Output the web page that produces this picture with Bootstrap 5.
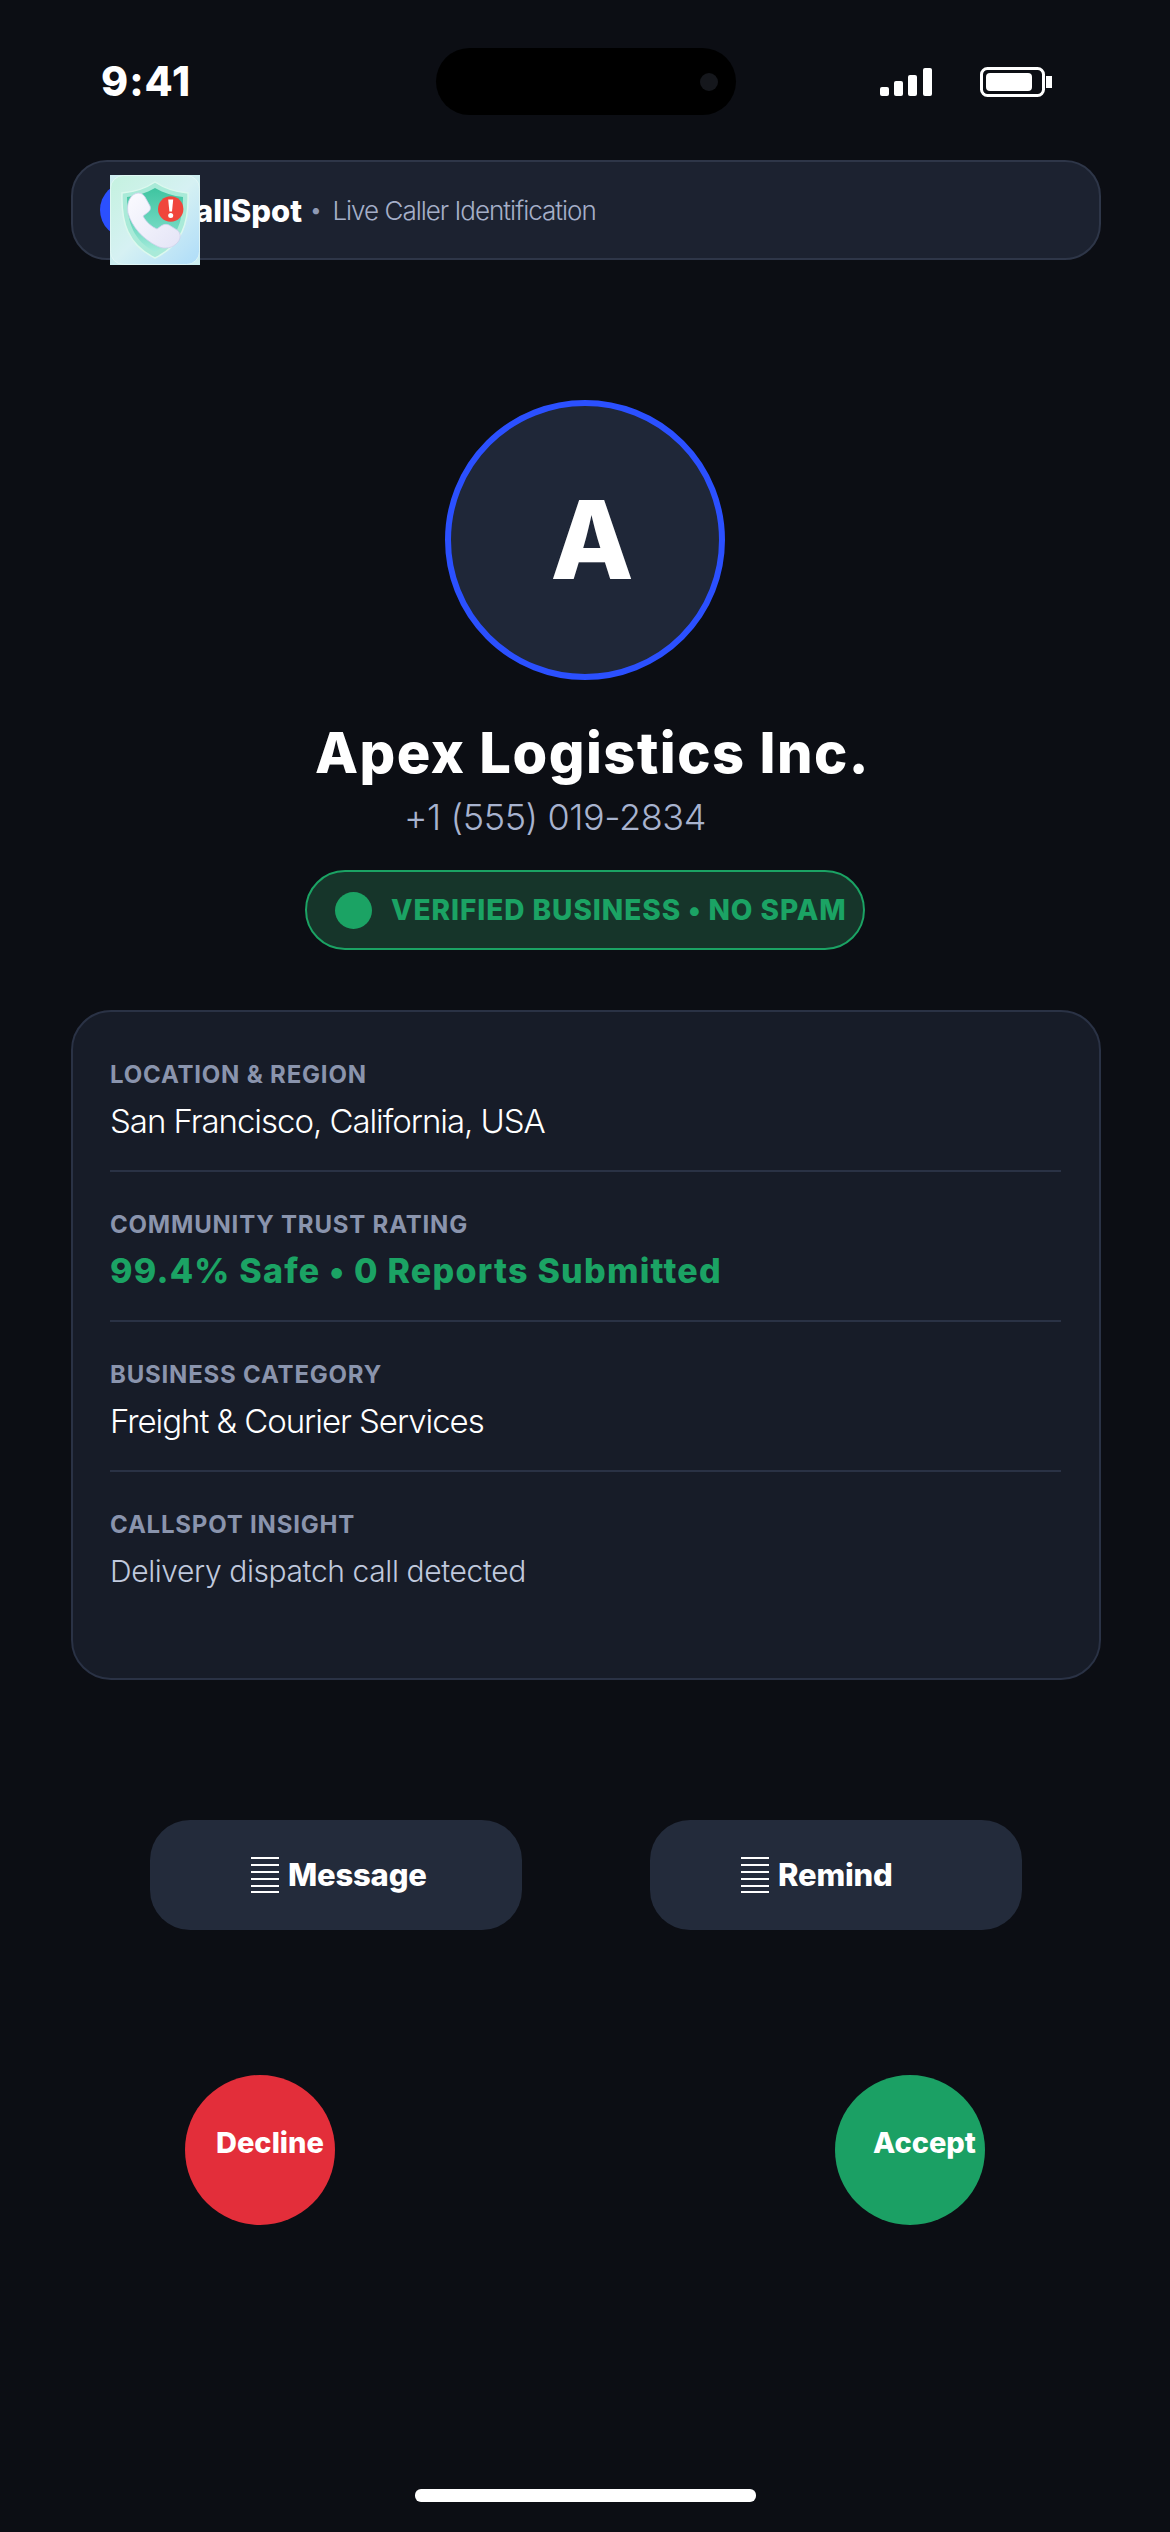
<!DOCTYPE html>
<html lang="en">
<head>
    <meta charset="UTF-8">
    <title>CallSpot</title>
    <link href="https://cdn.jsdelivr.net/npm/bootstrap@5.3.0/dist/css/bootstrap.min.css" rel="stylesheet">
    <style>
        html, body { background: #0c0e14; }
        body { font-family: Inter, "Liberation Sans", sans-serif; color: #fff; width: 1170px; height: 2532px; overflow: hidden; }
        .status-row { padding: 48px 118px 0 101px; height: 115px; }
        .status-time { width: 335px; font-size: 41px; font-weight: 800; line-height: 67px; letter-spacing: 1px; }
        .island { width: 300px; height: 67px; background: #000; border-radius: 34px; }
        .island-cam { width: 18px; height: 18px; background: #15171c; border-radius: 50%; margin-right: 18px; }
        .status-icons { margin-left: auto; gap: 48px; height: 67px; }
        .brand-bar { margin: 45px 69px 0 71px; height: 100px; background: #1c2230; border: 2px solid #2e3648; border-radius: 36px; padding-left: 99px; }
        .brand-dot { left: 27px; top: 20px; width: 56px; height: 56px; background: #2b50ff; }
        .brand-logo { left: 37px; top: 13px; width: 90px; height: 90px; }
        .brand-name { font-size: 31px; font-weight: 800; line-height: 1; }
        .brand-sep { font-size: 20px; color: #8f9ab5; margin: 0 11px 0 8px; }
        .brand-sub { font-size: 26px; font-weight: 300; color: #a5afc8; letter-spacing: -1px; }
        .avatar { width: 280px; height: 280px; margin: 140px auto 0; background: #1f2738; border: 6px solid #2b50ff; font-size: 108px; font-weight: 800; padding-left: 14px; }
        .caller-name { font-size: 56px; font-weight: 800; letter-spacing: 1.5px; text-align: center; margin: 39px 0 0 15px; line-height: 68px; }
        .caller-phone { font-size: 36px; font-weight: 300; color: #a8b3cf; text-align: center; margin: 5px 60px 0 0; line-height: 50px; letter-spacing: -.4px; }
        .verified-pill { width: 560px; height: 80px; margin: 28px 0 0 305px; background: #16352a; border: 2px solid #1ba364; padding-left: 28px; gap: 19px; }
        .verified-dot { width: 37px; height: 37px; background: #1ba364; }
        .verified-text { font-size: 28px; font-weight: 800; color: #1ba364; letter-spacing: .95px; }
        .info-card { margin: 60px 69px 0 71px; height: 670px; background: #171c28; border: 2px solid #2a3245; border-radius: 40px; padding: 10px 38px 0 37px; }
        .info-row { height: 150px; padding-top: 36px; border-bottom: 2px solid #2a3245; }
        .info-row:last-child { border-bottom: 0; }
        .info-label { font-size: 24px; font-weight: 700; color: #8a94ad; line-height: 32px; letter-spacing: .8px; padding-top: 1px; }
        .info-value { font-size: 33px; font-weight: 300; line-height: 44px; margin-top: 8px; letter-spacing: -1.05px; }
        .info-good { font-size: 34px; font-weight: 800; color: #1ba364; letter-spacing: 1.25px; }
        .info-soft { font-size: 30px; color: #c0c9dd; letter-spacing: -.4px; }
        .action-row { margin: 140px 0 0 150px; gap: 128px; }
        .action-btn { width: 372px; height: 110px; background: #232b3b; border: 0; border-radius: 40px; color: #fff; font-size: 31px; font-weight: 800; letter-spacing: -.2px; gap: 9px; }
        .action-btn:hover, .action-btn:active { background: #232b3b; color: #fff; }
        .pad-msg { padding: 0 0 0 101px; }
        .pad-rem { padding: 0 0 0 91px; }
        .call-row { margin: 145px 0 0 185px; gap: 500px; }
        .call-btn { width: 150px; height: 150px; border: 0; color: #fff; font-size: 29px; font-weight: 800; padding: 0 0 14px 0; white-space: nowrap; text-align: left; }
        .call-decline, .call-decline:hover { background: #e32e3a; color: #fff; padding-left: 31px; }
        .call-accept, .call-accept:hover { background: #1ba064; color: #fff; padding-left: 38px; }
        .home-bar { width: 341px; height: 13px; margin: 264px 0 0 415px; background: #fff; border-radius: 6px; }
    </style>
</head>
<body>
    <div class="status-row d-flex align-items-start">
        <div class="status-time">9:41</div>
        <div class="island d-flex align-items-center justify-content-end"><div class="island-cam"></div></div>
        <div class="status-icons d-flex align-items-center">
            <svg width="52" height="28" viewBox="0 0 52 28" fill="#fff"><rect x="0" y="19" width="9" height="9" rx="2"/><rect x="14" y="13" width="9" height="15" rx="2"/><rect x="28" y="7" width="9" height="21" rx="2"/><rect x="43" y="0" width="9" height="28" rx="2"/></svg>
            <svg width="72" height="30" viewBox="0 0 72 30"><rect x="1.5" y="1.5" width="62" height="27" rx="6" fill="none" stroke="#fff" stroke-width="3"/><rect x="6" y="6" width="46" height="18" rx="4" fill="#fff"/><rect x="66" y="9" width="6" height="12" fill="#fff"/></svg>
        </div>
    </div>

    <div class="brand-bar position-relative d-flex align-items-center">
        <div class="brand-dot position-absolute rounded-circle"></div>
        <span class="brand-name">CallSpot</span><span class="brand-sep">•</span><span class="brand-sub">Live Caller Identification</span>
        <svg class="brand-logo position-absolute" viewBox="0 0 90 90">
            <defs>
                <linearGradient id="bg" x1="0" y1="0" x2="1" y2="1"><stop offset="0" stop-color="#c4f2df"/><stop offset=".5" stop-color="#d6f1f3"/><stop offset="1" stop-color="#aedcf9"/></linearGradient>
                <linearGradient id="sh" x1="0" y1="0" x2="0" y2="1"><stop offset="0" stop-color="#3fc4a0"/><stop offset=".6" stop-color="#6fd8c0"/><stop offset="1" stop-color="#a6ecdc"/></linearGradient>
                <linearGradient id="hs" x1="0" y1="0" x2="1" y2="1"><stop offset="0" stop-color="#fbfbff"/><stop offset="1" stop-color="#e4e4f6"/></linearGradient>
            </defs>
            <rect width="90" height="90" fill="#cdeef0"/>
            <rect x=".5" y=".5" width="89" height="89" rx="13" fill="url(#bg)" stroke="#e8f9f6" stroke-width=".7"/>
            <path d="M45 7 C54 13 65 17 78 18 C79 48 72 70 45 83 C18 70 11 48 12 18 C25 17 36 13 45 7Z" fill="#a9ead8" stroke="#dcf8ee" stroke-width="1.5"/>
            <path d="M45 13 C54 18 63 21 73 22 C73 48 66 66 45 77 C24 66 17 48 17 22 C27 21 36 18 45 13Z" fill="url(#sh)"/>
            <path d="M22 21 C26 17 32 17 35 22 L40 31 C41 34 40 36 37 38 L33 41 C36 47 42 52 47 54 L51 51 C54 49 56 49 59 50 L67 55 C71 58 71 63 68 67 C63 73 55 75 47 71 C33 64 22 52 18 38 C17 31 18 25 22 21Z" fill="url(#hs)" stroke="#cfd1ec" stroke-width=".8"/>
            <circle cx="60.7" cy="34" r="12.7" fill="#f0463c"/>
            <path d="M58.2 24.5 H63.2 L62 36.5 H59.4Z" fill="#fff"/>
            <circle cx="60.7" cy="40.5" r="2.5" fill="#fff"/>
        </svg>
    </div>

    <div class="avatar rounded-circle d-flex align-items-center justify-content-center">A</div>
    <div class="caller-name">Apex Logistics Inc.</div>
    <div class="caller-phone">+1 (555) 019-2834</div>
    <div class="verified-pill rounded-pill d-flex align-items-center">
        <span class="verified-dot rounded-circle"></span>
        <span class="verified-text">VERIFIED BUSINESS • NO SPAM</span>
    </div>

    <div class="info-card">
        <div class="info-row">
            <div class="info-label">LOCATION &amp; REGION</div>
            <div class="info-value">San Francisco, California, USA</div>
        </div>
        <div class="info-row">
            <div class="info-label">COMMUNITY TRUST RATING</div>
            <div class="info-value info-good">99.4% Safe • 0 Reports Submitted</div>
        </div>
        <div class="info-row">
            <div class="info-label">BUSINESS CATEGORY</div>
            <div class="info-value">Freight &amp; Courier Services</div>
        </div>
        <div class="info-row">
            <div class="info-label">CALLSPOT INSIGHT</div>
            <div class="info-value info-soft">Delivery dispatch call detected</div>
        </div>
    </div>

    <div class="action-row d-flex">
        <button class="btn action-btn pad-msg d-flex align-items-center">
            <svg width="28" height="36" viewBox="0 0 28 36" stroke="#fff" stroke-width="2"><path d="M0 1H28M0 8H28M0 15H28M0 22H28M0 29H28M0 35H28"/></svg>
            <span>Message</span>
        </button>
        <button class="btn action-btn pad-rem d-flex align-items-center">
            <svg width="28" height="36" viewBox="0 0 28 36" stroke="#fff" stroke-width="2"><path d="M0 1H28M0 8H28M0 15H28M0 22H28M0 29H28M0 35H28"/></svg>
            <span>Remind</span>
        </button>
    </div>

    <div class="call-row d-flex">
        <button class="btn call-btn call-decline rounded-circle">Decline</button>
        <button class="btn call-btn call-accept rounded-circle">Accept</button>
    </div>

    <div class="home-bar"></div>

    <script src="https://cdn.jsdelivr.net/npm/bootstrap@5.3.0/dist/js/bootstrap.bundle.min.js"></script>
</body>
</html>
